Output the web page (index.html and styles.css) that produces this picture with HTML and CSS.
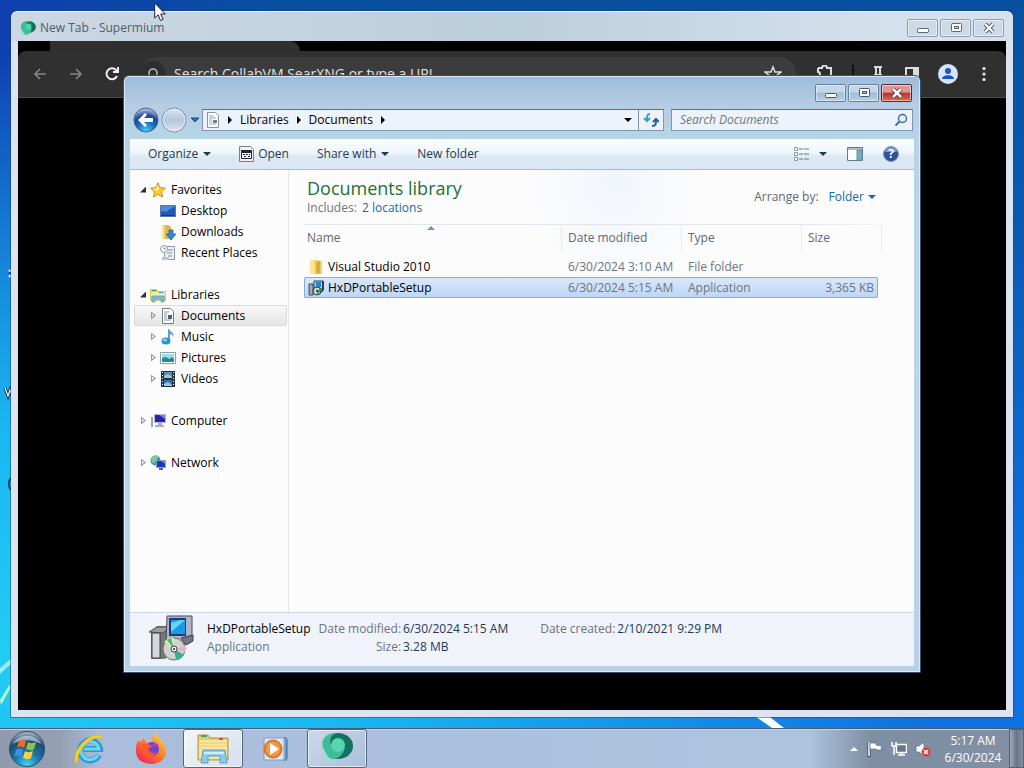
FILE: index.html
```
<!DOCTYPE html>
<html lang="en">
<head>
  <meta charset="UTF-8" />
  <meta name="viewport" content="width=device-width, initial-scale=1.0" />
  <title>Documents</title>
  <link rel="stylesheet" href="styles.css">
</head>
<body>
  <main class="desktop">
    <!-- wallpaper light streaks and the edges of desktop icons -->
    <svg class="streak streak-left" viewBox="0 0 60 100" aria-hidden="true">
      <path d="M0 40 L12 30 V35 L0 46Z" fill="#d4f6ff" opacity=".7"/>
      <path d="M0 72 L10 56 V61 L1 77Z" fill="#b9f7c9"/>
    </svg>
    <svg class="streak streak-right" viewBox="0 0 40 14" aria-hidden="true">
      <path d="M0 0 H14 L32 14 H20Z" fill="#fff"/>
    </svg>
    <svg class="desktop-edge" viewBox="0 0 12 230" aria-hidden="true">
      <path d="M9 6l2 2M9 13l2-2" stroke="#fff" stroke-width="2"/>
      <path d="M9 9h3" stroke="#123" stroke-width="1.5"/>
      <path d="M5 124l3 8 2-6 2 5" fill="none" stroke="#10304a" stroke-width="3"/>
      <path d="M5 124l3 8 2-6 2 5" fill="none" stroke="#fff" stroke-width="1.2"/>
      <path d="M11 214c-3 2-3 9 0 12" fill="none" stroke="#10304a" stroke-width="1.5"/>
    </svg>

    <section class="window browser">
      <header class="browser-title">
        <svg width="16" height="16" viewBox="0 0 32 32" aria-hidden="true">
          <ellipse cx="17" cy="14" rx="15" ry="12" fill="#14705f"/>
          <path d="M2 16C0 6 10 0 20 3c-7 1-9 5-8 10 1 6 8 6 12 4-2 9-8 13-13 13C5 28 3 23 2 16z" fill="#3ebe98"/>
          <circle cx="17" cy="13" r="6" fill="#4fcfab"/>
          <path d="M2 16c3 5 5 11 12 14-7 0-11-6-12-14z" fill="#91e9d0"/>
        </svg>
        <span class="browser-name">New Tab - Supermium</span>
        <div class="caption">
          <button class="cap" aria-label="Minimize"><svg width="14" height="12" viewBox="0 0 14 12"><rect x="1.500" y="6.500" width="11" height="4" rx="1" fill="#fff" stroke="#56657a"/></svg></button>
          <button class="cap" aria-label="Maximize"><svg width="14" height="12" viewBox="0 0 14 12"><rect x="2.500" y="1.500" width="10" height="8" rx="1" fill="#fff" stroke="#56657a"/><rect x="5.500" y="4.500" width="4" height="2" fill="#c8d6e4" stroke="#56657a"/></svg></button>
          <button class="cap" aria-label="Close"><svg width="14" height="12" viewBox="0 0 14 12"><path d="M3 2l8 8M11 2l-8 8" stroke="#56657a" stroke-width="4"/><path d="M3 2l8 8M11 2l-8 8" stroke="#fff" stroke-width="2"/></svg></button>
        </div>
      </header>
      <div class="browser-page">
        <div class="tabstrip"><div class="tab"></div></div>
        <div class="browser-toolbar">
          <button class="tool" aria-label="Back"><svg width="16" height="16" viewBox="0 0 16 16"><path d="M14 8H3M8 3L3 8l5 5" fill="none" stroke="#858585" stroke-width="1.600"/></svg></button>
          <button class="tool" aria-label="Forward"><svg width="16" height="16" viewBox="0 0 16 16"><path d="M2 8h11M8 3l5 5-5 5" fill="none" stroke="#858585" stroke-width="1.600"/></svg></button>
          <button class="tool" aria-label="Reload"><svg width="16" height="16" viewBox="0 0 16 16"><path d="M13 10A5.500 5.500 0 1 1 12 4l2 2M14 1v5H9" fill="none" stroke="#f1f1f1" stroke-width="2"/></svg></button>
          <div class="omnibox">
            <span class="omni-icon"><svg width="14" height="14" viewBox="0 0 14 14" aria-hidden="true"><circle cx="7" cy="6" r="4" fill="none" stroke="#bbb" stroke-width="1.600"/><path d="M9 9l4 4" stroke="#bbb" stroke-width="1.600"/></svg></span>
            <input class="omni-input" type="text" aria-label="Address" placeholder="Search CollabVM SearXNG or type a URL">
            <svg width="18" height="18" viewBox="0 0 18 18" aria-hidden="true"><path d="M9 2l2 5h6l-5 4 2 6-5-4-5 4 2-6-5-4h6z" fill="none" stroke="#ddd" stroke-width="1.500"/></svg>
          </div>
          <div class="browser-actions">
            <button class="tool" aria-label="Extensions"><svg width="18" height="18" viewBox="0 0 18 18"><path d="M2 3h4a2 2 0 0 1 5 0h4v5M2 3v4a2 2 0 0 1 0 4v5h13V8" fill="none" stroke="#ddd" stroke-width="2"/></svg></button>
            <span class="divider"></span>
            <button class="tool" aria-label="Pinned"><svg width="16" height="18" viewBox="0 0 16 18"><path d="M4 2h8M6 2v8M10 2v8M4 10h8" fill="none" stroke="#ddd" stroke-width="2"/></svg></button>
            <button class="tool" aria-label="Side panel"><svg width="16" height="18" viewBox="0 0 16 18"><rect x="2" y="3" width="12" height="12" fill="none" stroke="#ddd" stroke-width="2"/><path d="M9 3h5v12H9z" fill="#ddd"/></svg></button>
            <button class="tool" aria-label="Profile"><svg width="20" height="20" viewBox="0 0 20 20"><circle cx="10" cy="10" r="10" fill="#d6e4fb"/><circle cx="10" cy="7" r="3" fill="#1b56c8"/><path d="M4 15c0-5 12-5 12 0z" fill="#1b56c8"/></svg></button>
            <button class="tool" aria-label="Menu"><svg width="16" height="16" viewBox="0 0 16 16"><g fill="#eee"><circle cx="8" cy="2.500" r="1.600"/><circle cx="8" cy="8" r="1.600"/><circle cx="8" cy="13.500" r="1.600"/></g></svg></button>
          </div>
        </div>
      </div>
    </section>

    <section class="window explorer">
      <header class="explorer-title">
        <div class="caption">
          <button class="cap" aria-label="Minimize"><svg width="14" height="12" viewBox="0 0 14 12"><rect x="1.500" y="6.500" width="11" height="4" rx="1" fill="#fff" stroke="#46566c"/></svg></button>
          <button class="cap" aria-label="Maximize"><svg width="14" height="12" viewBox="0 0 14 12"><rect x="2.500" y="1.500" width="10" height="8" rx="1" fill="#fff" stroke="#46566c"/><rect x="5.500" y="4.500" width="4" height="2" fill="#a9bfd6" stroke="#46566c"/></svg></button>
          <button class="cap cap-close" aria-label="Close"><svg width="14" height="12" viewBox="0 0 14 12"><path d="M3 2l8 8M11 2l-8 8" stroke="#5b2a2c" stroke-width="4"/><path d="M3 2l8 8M11 2l-8 8" stroke="#fff" stroke-width="2.500"/></svg></button>
        </div>
      </header>

      <nav class="navbar">
        <div class="travel">
          <button class="round" aria-label="Back">
            <svg width="26" height="26" viewBox="0 0 26 26">
              <defs>
                <radialGradient id="backFill" cx=".5" cy=".95" r=".9"><stop offset="0" stop-color="#45d0f4"/><stop offset=".45" stop-color="#1668bd"/><stop offset=".7" stop-color="#1b4796"/><stop offset="1" stop-color="#a9bfe0"/></radialGradient>
              </defs>
              <circle cx="13" cy="13" r="12" fill="url(#backFill)" stroke="#4b6384"/>
              <path d="M5 13l7-7 2 2-3 3h9v4h-9l3 3-2 2z" fill="#fff"/>
            </svg>
          </button>
          <button class="round" aria-label="Forward">
            <svg width="26" height="26" viewBox="0 0 26 26">
              <defs><linearGradient id="fwdFill" x2="0" y2="1"><stop offset="0" stop-color="#dbe6f2"/><stop offset=".5" stop-color="#b4c7dd"/><stop offset="1" stop-color="#dde8f3"/></linearGradient></defs>
              <circle cx="13" cy="13" r="12" fill="url(#fwdFill)" stroke="#7388a3"/>
              <circle cx="13" cy="13" r="11" fill="none" stroke="#e7eff7"/>
            </svg>
          </button>
          <button class="recent" aria-label="Recent pages"><svg width="10" height="8" viewBox="0 0 10 8"><path d="M1 2h8L5 6z" fill="#2d79b4" stroke="#234a76"/></svg></button>
        </div>
        <div class="address">
          <svg class="doc-icon" width="16" height="16" viewBox="0 0 16 16" aria-hidden="true"><path d="M2.500.5h8l3 3v12h-11z" fill="#fff" stroke="#8694a4"/><path d="M4 4h5M4 6h7M4 8h3M4 10h3M4 12h7" stroke="#9aaabb"/><path d="M8 8h4v3H8z" fill="#5f86a8"/></svg>
          <span class="tri"></span>
          <a href="#">Libraries</a>
          <span class="tri"></span>
          <a href="#">Documents</a>
          <span class="tri"></span>
          <button class="drop" aria-label="Previous locations"><span class="down"></span></button>
          <button class="refresh" aria-label="Refresh"><svg width="16" height="16" viewBox="0 0 16 16"><path d="M7 2C4 2 4 4 4 8M1 6l3 3 3-3" fill="none" stroke="#3d9bc8" stroke-width="2"/><path d="M9 14c4 0 4-2 4-6M10 10l3-3 3 3" fill="none" stroke="#275f91" stroke-width="2"/></svg></button>
        </div>
        <div class="search">
          <input type="text" aria-label="Search Documents" placeholder="Search Documents">
          <svg width="14" height="14" viewBox="0 0 14 14" aria-hidden="true"><circle cx="8.500" cy="5.500" r="4" fill="#e3f1fb" stroke="#356fae" stroke-width="1.500"/><path d="M5.500 8.500l-4 4" stroke="#356fae" stroke-width="2"/></svg>
        </div>
      </nav>

      <div class="commands">
        <button class="cmd">Organize <span class="down"></span></button>
        <button class="cmd cmd-open"><svg width="15" height="16" viewBox="0 0 15 16" aria-hidden="true"><path d="M.5.5h11l3 3v12H.5z" fill="#f4f1ea" stroke="#7d7d80"/><path d="M2.500 4.500h10v8h-10z" fill="#fff" stroke="#20263c"/><path d="M2 4h11v3H2z" fill="#20263c"/><path d="M4 8h2v1H4zM7 8h2v1H7zM10 8h1v1h-1zM5 10h2v1H5zM9 10h2v1H9z" fill="#20263c"/></svg>Open</button>
        <button class="cmd cmd-share">Share with <span class="down"></span></button>
        <button class="cmd cmd-new">New folder</button>
        <div class="view-tools">
          <button class="cmd" aria-label="Change your view"><svg width="16" height="14" viewBox="0 0 16 14"><g fill="#fff" stroke="#8c99a8"><path d="M1.500.5h3v3h-3zM1.500 5.500h3v3h-3zM1.500 10.500h3v3h-3z"/></g><path d="M6 2h4M11 2h5M6 7h4M11 7h5M6 12h4M11 12h5" stroke="#657587"/></svg><span class="down"></span></button>
          <button class="cmd" aria-label="Preview pane"><svg width="16" height="14" viewBox="0 0 16 14"><path d="M.5.5h15v13H.5z" fill="#fff" stroke="#64788e"/><path d="M1 2h15" stroke="#64788e"/><path d="M10 3h5v10h-5z" fill="#66b8bb" stroke="#74889c"/></svg></button>
          <button class="cmd" aria-label="Help"><svg width="16" height="16" viewBox="0 0 16 16"><circle cx="8" cy="8" r="7.500" fill="#2f52a0" stroke="#8592aa"/><path d="M2 6a6 5 0 0 1 12 0z" fill="#7d99cf"/><text class="help-mark" x="8" y="12" text-anchor="middle">?</text></svg></button>
        </div>
      </div>

      <div class="content">
        <aside class="tree">
          <ul>
            <li class="root"><span class="twist open"></span>
              <svg width="16" height="16" viewBox="0 0 16 16" aria-hidden="true"><path d="M8 .8l2.200 4.800 5.200.6-3.900 3.500 1.100 5.300L8 12.400 3.400 15l1.100-5.300L.6 6.200l5.200-.6z" fill="#fcc934" stroke="#d68a22"/><path d="M8 3l1.300 3.500L7 9 3 7l3.300-.5z" fill="#fff2a0"/></svg>
              <a href="#">Favorites</a></li>
            <li><span class="twist"></span>
              <svg width="16" height="16" viewBox="0 0 16 16" aria-hidden="true"><path d="M.5 2.500h15v11H.5z" fill="#235ab9" stroke="#5578a9"/><path d="M1 3h14L6 9l-5-1z" fill="#4a8cdb"/><path d="M1 12h14v1H1z" fill="#163a78"/></svg>
              <a href="#">Desktop</a></li>
            <li><span class="twist"></span>
              <svg width="16" height="16" viewBox="0 0 16 16" aria-hidden="true"><path d="M1 1h7l3 2v12H1z" fill="#f3d578"/><path d="M5 1h3l3 2v12H5z" fill="#e1b54a"/><path d="M1 1h2v14H1z" fill="#fff0b5"/><path d="M9 6h4v4h3l-5 6-5-6h3z" fill="#348ad0" stroke="#2566a1" stroke-width=".8"/></svg>
              <a href="#">Downloads</a></li>
            <li><span class="twist"></span>
              <svg width="16" height="16" viewBox="0 0 16 16" aria-hidden="true"><path d="M4.500 1.500h10v13h-8l-2-2z" fill="#edf1f4" stroke="#8b98a3"/><circle cx="4" cy="4" r="3.500" fill="#fff" stroke="#8b98a3"/><path d="M4 2v2h2M8 5h5M7 8h5M8 11h4" fill="none" stroke="#7f8e9a"/><path d="M2 12h7v3H2z" fill="#bcc6cd"/></svg>
              <a href="#">Recent Places</a></li>
          </ul>
          <ul>
            <li class="root"><span class="twist open"></span>
              <svg width="16" height="16" viewBox="0 0 16 16" aria-hidden="true"><path d="M0 2h7l1 2h8v10H0z" fill="#e3ca63"/><path d="M1 5h14v4H1z" fill="#f7eaa0"/><path d="M2 3h4v1H2z" fill="#3b9b4b"/><path d="M9 5h4v1H9z" fill="#3d8ed0"/><path d="M2 9h12v6h-3v-3H5v3H2z" fill="#79bedb" stroke="#579db8" stroke-width=".7"/></svg>
              <a href="#">Libraries</a></li>
            <li class="current"><span class="twist closed"></span>
              <svg width="16" height="16" viewBox="0 0 16 16" aria-hidden="true"><path d="M2.500.5h8l3 3v12h-11z" fill="#fff" stroke="#707c87"/><path d="M4 4h5M4 6h3M4 8h3M4 10h3M4 12h7" stroke="#8a98a6"/><path d="M8 7h4v4H8z" fill="#3f638a"/></svg>
              <a href="#">Documents</a></li>
            <li><span class="twist closed"></span>
              <svg width="16" height="16" viewBox="0 0 16 16" aria-hidden="true"><path d="M9 0c1 3 6 3 4 9 0-3-1-4-3-4v7H8V0z" fill="#5b9fd0"/><ellipse cx="6" cy="12" rx="4.500" ry="3.500" fill="#2798cf"/><ellipse cx="5" cy="11" rx="2" ry="1.200" fill="#8bdcf2"/></svg>
              <a href="#">Music</a></li>
            <li><span class="twist closed"></span>
              <svg width="16" height="16" viewBox="0 0 16 16" aria-hidden="true"><path d="M.5 2.500h15v11H.5z" fill="#fff" stroke="#8c9caa"/><path d="M2 4h12v8H2z" fill="#9edce5"/><path d="M2 8l4-1 3 2 3-2 2 2v3H2z" fill="#278a94"/></svg>
              <a href="#">Pictures</a></li>
            <li><span class="twist closed"></span>
              <svg width="16" height="16" viewBox="0 0 16 16" aria-hidden="true"><path d="M1 0h14v16H1z" fill="#26323f"/><path d="M4 1h8v6H4z" fill="#538ec5"/><path d="M4 9h8v6H4z" fill="#3374b0"/><path d="M4 5l4-2 4 3v1H4zM4 13l4-2 4 3v1H4z" fill="#9bc9dc"/><path d="M2.500 1v14M13.500 1v14" stroke="#e2edf5" stroke-dasharray="1 2"/></svg>
              <a href="#">Videos</a></li>
          </ul>
          <ul>
            <li class="root"><span class="twist closed"></span>
              <svg width="16" height="16" viewBox="0 0 16 16" aria-hidden="true"><path d="M4 1h12v9H4z" fill="#b5bcce"/><path d="M5 2h10v7H5z" fill="#2627a8"/><path d="M9 2h6v4z" fill="#7383e5"/><path d="M8 10h4v2h2v2H5v-2h3z" fill="#a7adb8"/><path d="M1 4h2v10H1z" fill="#9ba3ad"/></svg>
              <a href="#">Computer</a></li>
          </ul>
          <ul>
            <li class="root"><span class="twist closed"></span>
              <svg width="16" height="16" viewBox="0 0 16 16" aria-hidden="true"><circle cx="5.500" cy="5.500" r="5" fill="#2492ac"/><path d="M1 4c2-4 6-4 8-2L6 5 4 9C2 8 1 6 1 4z" fill="#72cf96"/><path d="M6 5h10v8H6z" fill="#8fa1c2"/><path d="M7 6h8v6H7z" fill="#1e35b5"/><path d="M11 6h4v3z" fill="#6581e6"/><path d="M9 13h4v2H9z" fill="#5565a1"/></svg>
              <a href="#">Network</a></li>
          </ul>
        </aside>

        <div class="library">
          <div class="library-head">
            <div>
              <h1>Documents library</h1>
              <p>Includes: <a href="#">2 locations</a></p>
            </div>
            <div class="arrange">Arrange by: <button>Folder <span class="down"></span></button></div>
          </div>
          <div class="listing">
            <table>
              <thead>
                <tr>
                  <th class="col-name">Name<span class="sorted"></span></th>
                  <th class="col-date">Date modified</th>
                  <th class="col-type">Type</th>
                  <th class="col-size">Size</th>
                </tr>
              </thead>
              <tbody>
                <tr>
                  <td class="name"><div class="file"><svg width="16" height="16" viewBox="0 0 16 16" aria-hidden="true"><path d="M2 1h6l6 1v13H2z" fill="#efd06b"/><path d="M2 1h4v14H2z" fill="#f9e69c"/><path d="M8 3l4-1v12l-4 1z" fill="#d8ad3d"/><path d="M6 3h2v12H6z" fill="#f5d977"/></svg>Visual Studio 2010</div></td>
                  <td>6/30/2024 3:10 AM</td>
                  <td>File folder</td>
                  <td class="size"></td>
                </tr>
                <tr class="selected">
                  <td class="name"><div class="file"><svg width="16" height="16" viewBox="0 0 16 16" aria-hidden="true"><path d="M1 4h4v11H1z" fill="#9caab5" stroke="#334b5b"/><path d="M6 1h9v8H6z" fill="#bacad6" stroke="#2d4356"/><path d="M8 2h5v5H8z" fill="#2287d0"/><circle cx="9" cy="11" r="4" fill="#cbd8cc" stroke="#233e3d"/><path d="M9 11l3-3 1 3-4 4z" fill="#3ba075"/><circle cx="9" cy="11" r="1" fill="#213242"/><path d="M15 1v9l-2 2" fill="none" stroke="#16283c" stroke-width="1.500"/></svg>HxDPortableSetup</div></td>
                  <td>6/30/2024 5:15 AM</td>
                  <td>Application</td>
                  <td class="size">3,365 KB</td>
                </tr>
              </tbody>
            </table>
          </div>
        </div>
      </div>

      <footer class="details">
        <svg width="48" height="48" viewBox="0 0 48 48" aria-hidden="true">
          <path d="M4 18l6-6h13v28l-5 5H4z" fill="#75777a"/>
          <path d="M5 19h8v25H5z" fill="#d5d7da" stroke="#3d3e41"/>
          <path d="M2 18l8-5h13l-7 6z" fill="#9b9da0" stroke="#4b4c50"/>
          <path d="M20 2h25v24l-5 4H19z" fill="#b1b4c4" stroke="#4c4d60"/>
          <path d="M22 4h17v18H22z" fill="#233a79"/>
          <path d="M24 6h14v14H24z" fill="#159ce3"/>
          <path d="M24 18V9l10-3h4z" fill="#64d6f6"/>
          <path d="M34 24l12-3v6l-7 4z" fill="#737587" stroke="#3f4052"/>
          <circle cx="27" cy="35" r="11" fill="#cfd3d2" stroke="#66706f"/>
          <path d="M27 35L17 28c3-4 7-5 10-4z" fill="#dce999"/>
          <path d="M27 35l-7-9 4-2z" fill="#39b69d"/>
          <path d="M27 35l10 6c-2 3-5 5-8 5z" fill="#36b18d"/>
          <path d="M27 35l11-3v6z" fill="#e3b8bd"/>
          <circle cx="27" cy="35" r="3" fill="#f4f4f4" stroke="#444"/><circle cx="27" cy="35" r="1" fill="#222"/>
        </svg>
        <div class="detail-name"><strong>HxDPortableSetup</strong><span>Application</span></div>
        <dl>
          <dt>Date modified:</dt><dd>6/30/2024 5:15 AM</dd>
          <dt>Size:</dt><dd>3.28 MB</dd>
        </dl>
        <dl class="created">
          <dt>Date created:</dt><dd>2/10/2021 9:29 PM</dd>
        </dl>
      </footer>
    </section>

    <svg class="cursor" width="12" height="20" viewBox="0 0 12 20" aria-hidden="true"><path d="M.7 1v15l3.400-3.200 2.400 5.700 2.600-1.100-2.400-5.400h4.600z" fill="#fff" stroke="#18203a"/></svg>
  </main>

  <footer class="taskbar">
    <button class="start" aria-label="Start">
      <svg width="38" height="38" viewBox="0 0 38 38">
        <defs><radialGradient id="orb" cx=".5" cy=".95" r=".95"><stop offset="0" stop-color="#3fd5f7"/><stop offset=".4" stop-color="#1c72a8"/><stop offset=".75" stop-color="#22496f"/><stop offset="1" stop-color="#b5c5d6"/></radialGradient></defs>
        <circle cx="19" cy="19" r="17.500" fill="url(#orb)" stroke="#2b4a69"/>
        <path d="M5 14a15 13 0 0 1 28 0c-8-5-20-5-28 0z" fill="#dce6ee" opacity=".6"/>
        <path d="M11 11c3-2 5-1 7 0l-2 7c-2-2-5-2-7 0z" fill="#ee6a2c"/>
        <path d="M20 12c3 2 5 1 8 0l-2 7c-3 2-5 1-8 0z" fill="#8cc63f"/>
        <path d="M8 20c3-2 5-1 7 0l-2 7c-2-2-5-2-7 0z" fill="#3796dd"/>
        <path d="M17 21c3 2 5 1 8 0l-2 7c-3 2-5 1-8 0z" fill="#fccf3d"/>
      </svg>
    </button>
    <div class="tasks">
      <button class="task" aria-label="Internet Explorer">
        <svg width="34" height="34" viewBox="0 0 34 34"><path d="M27 23A10 10 0 1 1 28 17H11" fill="none" stroke="#2d9bd6" stroke-width="6"/><path d="M26 23A9 9 0 1 1 27 17H12" fill="none" stroke="#6fd3f5" stroke-width="3"/><path d="M4 31C-1 25 9 6 24 3c5-1 7 1 5 6 0-3-2-4-5-3C13 9 4 23 6 31z" fill="#f3d12e" stroke="#d2ab20" stroke-width=".6"/></svg>
      </button>
      <button class="task" aria-label="Firefox">
        <svg width="34" height="34" viewBox="0 0 34 34"><defs><linearGradient id="fox" x1="1" x2=".2" y2="1"><stop offset="0" stop-color="#ffe84b"/><stop offset=".45" stop-color="#ff8a24"/><stop offset="1" stop-color="#ed2457"/></linearGradient></defs><path d="M4 9l3 1 2-4 4 5c2-1 4-1 6 0l-1-6 4-4c0 5 9 7 10 17 1 8-6 14-14 14C8 32 2 27 2 19c0-4 0-7 2-10z" fill="url(#fox)"/><circle cx="18" cy="17" r="7" fill="#7042d1"/><path d="M9 12c3-1 7 0 10 3-4 0-5 2-4 4 2 3 5 2 7 1-2 7-13 5-14-2z" fill="#fc582e"/><path d="M17 11c3-1 7 1 8 5-2-2-4-2-6-1z" fill="#a13fc4"/></svg>
      </button>
      <button class="task task-open task-active" aria-label="Documents">
        <svg width="36" height="34" viewBox="0 0 36 34"><path d="M3 3h10l2 3h18v22H3z" fill="#e8c967" stroke="#ba963b"/><path d="M4 8h28v19H4z" fill="#f9e7a1"/><path d="M4 11h28M4 14h28" stroke="#e8ca72"/><path d="M6 3h6v2H6z" fill="#44a06e"/><path d="M16 5h6v2h-6z" fill="#ddb443"/><path d="M24 6h4v2h-4z" fill="#d54b31"/><path d="M8 18h22l2 13h-7v-7H13v7H6z" fill="#8bcce8" stroke="#579eca"/><path d="M9 20h20v2H9z" fill="#d2effa"/></svg>
      </button>
      <button class="task" aria-label="Windows Media Player">
        <svg width="32" height="32" viewBox="0 0 32 32"><path d="M5 5h20v22H5z" fill="#dce8f4" stroke="#7d9ec0"/><path d="M25 5h2v22h-2M28 6v20" fill="none" stroke="#4f8abf" stroke-width="1.500"/><circle cx="14" cy="16" r="9" fill="#ed812b" stroke="#cf671d"/><circle cx="14" cy="16" r="7" fill="#f39a43"/><path d="M11 10v12l9-6z" fill="#fff"/></svg>
      </button>
      <button class="task task-open" aria-label="Supermium">
        <svg width="34" height="34" viewBox="0 0 34 34"><ellipse cx="18" cy="14" rx="15" ry="13" fill="#14705f"/><path d="M3 15C0 6 8 0 18 1c-7 1-9 6-7 12 2 5 8 6 14 3-2 7-7 11-13 11-5-1-8-6-9-12z" fill="#3ebe98"/><circle cx="18" cy="13" r="7" fill="#56d5b1"/><path d="M3 15c3 6 5 13 13 16-8 0-12-7-13-16z" fill="#91e9d0"/></svg>
      </button>
    </div>
    <div class="tray">
      <button class="tray-button" aria-label="Show hidden icons"><svg width="10" height="6" viewBox="0 0 10 6"><path d="M1 5h8L5 1z" fill="#fff"/></svg></button>
      <button class="tray-button" aria-label="Action Center"><svg width="16" height="16" viewBox="0 0 16 16"><path d="M2 1v15" stroke="#384656" stroke-width="3"/><path d="M2 1v14" stroke="#fff" stroke-width="1.500"/><path d="M3 2h6v2l6 1-1 3 1 1H9V8H3z" fill="#fff" stroke="#566578" stroke-width=".7"/></svg></button>
      <button class="tray-button" aria-label="Network"><svg width="16" height="16" viewBox="0 0 16 16"><path d="M5.500 3.500h10v8h-10z" fill="#65758a" stroke="#fff" stroke-width="1.500"/><path d="M7 14h7M10.500 12v2" stroke="#fff" stroke-width="1.500"/><path d="M1 1v4h4V1M3 5v9" fill="none" stroke="#fff" stroke-width="1.500"/></svg></button>
      <button class="tray-button" aria-label="Volume muted"><svg width="16" height="16" viewBox="0 0 16 16"><path d="M1 5h3l5-4v14l-5-4H1z" fill="#fff" stroke="#5e6b7d" stroke-width=".7"/><circle cx="11" cy="11" r="4.500" fill="#d53d35"/><path d="M9 9l4 4M13 9l-4 4" stroke="#fff" stroke-width="1.500"/></svg></button>
      <button class="clock"><span>5:17 AM</span><span>6/30/2024</span></button>
      <button class="show-desktop" aria-label="Show desktop"></button>
    </div>
  </footer>
</body>
</html>
```
FILE: styles.css
```
* {
  box-sizing: border-box;
}

body {
  margin: 0;
  height: 100vh;
  display: flex;
  flex-direction: column;
  overflow: hidden;
  font-family: "Open Sans", "Noto Sans", sans-serif;
  font-size: 12px;
  line-height: 18px;
  color: #000;
}

button, input {
  font: inherit;
  color: inherit;
  margin: 0;
  padding: 0;
  border: 0;
  background: none;
}

button {
  display: flex;
  align-items: center;
  justify-content: center;
  white-space: nowrap;
}

a {
  color: inherit;
  text-decoration: none;
}

svg {
  display: block;
  flex: none;
}

.desktop {
  position: relative;
  flex: 1;
  background:
    radial-gradient(ellipse at 0 90%, #22ccf4 0, #1ab6f2 25%, rgba(20, 130, 225, 0) 65%),
    linear-gradient(90deg, rgba(18, 56, 184, .7), rgba(10, 80, 170, 0) 30%),
    linear-gradient(#06509f, #0a5ab0 30%, #0f70df 80%);
}

.streak, .desktop-edge, .cursor, .window {
  position: absolute;
}

.streak-left {
  left: 0;
  bottom: 0;
  width: 60px;
}

.streak-right {
  right: 232px;
  bottom: 0;
  width: 40px;
}

.desktop-edge {
  left: 0;
  top: 264px;
  width: 12px;
}

.cursor {
  left: 154px;
  top: 2px;
}

/* windows */
.window {
  display: flex;
  flex-direction: column;
}

.caption {
  display: flex;
  gap: 2px;
  margin-left: auto;
}

.cap {
  width: 31px;
  height: 18px;
  border: 1px solid #667f9c;
  border-radius: 2px;
  background: linear-gradient(#c3d6ea 45%, #a2bbd5 50%, #b9d0e5);
  box-shadow: inset 0 0 0 1px rgba(255, 255, 255, .5);
}

.cap-close {
  border-color: #552a3c;
  background: linear-gradient(#dc9a91 45%, #b93427 50%, #d46c58);
}

.browser {
  inset: 11px 11px 11px 11px;
  padding: 0 7px 7px;
  border-radius: 6px 6px 0 0;
  background: linear-gradient(90deg, #ccd8e3, #bccfdc 50%, #d5e2ee 90%) top / 100% 30px no-repeat, #dce4f2;
  box-shadow: inset 0 1px #e9f1f7, 0 0 0 1px rgba(30, 65, 100, .5);
}

.browser-title {
  height: 30px;
  padding: 4px 2px 0 2px;
  display: flex;
  align-items: center;
}

.browser-name {
  margin-left: 4px;
  color: #4c5d6d;
}

.browser .cap {
  border-color: #8d9eae;
  background: #cddae6;
}

.browser-page {
  flex: 1;
  background: #000;
}

.tabstrip {
  height: 10px;
  padding-left: 32px;
}

.tab {
  width: 250px;
  height: 10px;
  border-radius: 0 10px 0 0;
  background: #2f2f2f;
}

.browser-toolbar {
  height: 47px;
  display: flex;
  align-items: center;
  padding: 0 14px;
  gap: 20px;
  border-bottom: 1px solid #4d4d4d;
  border-radius: 8px 8px 0 0;
  background: #303030;
}

.tool {
  min-width: 16px;
}

.omnibox {
  flex: 1;
  height: 34px;
  display: flex;
  align-items: center;
  padding: 0 14px 0 0;
  border-radius: 17px;
  background: #3c3c3c;
}

.omni-icon {
  width: 26px;
  height: 26px;
  display: grid;
  place-items: center;
  border-radius: 50%;
  background: #2e2e2e;
}

.omni-input {
  flex: 1;
  margin-left: 8px;
  font-size: 14px;
}

.omni-input::placeholder {
  color: #e3e3e3;
}

.browser-actions {
  display: flex;
  align-items: center;
  gap: 18px;
}

.divider {
  width: 2px;
  height: 18px;
  margin-right: -2px;
  background: #111;
}

.explorer {
  inset: 75px 103px 55px 123px;
  border: 1px solid #37516c;
  border-radius: 6px 6px 0 0;
  padding: 0 6px 6px;
  background: linear-gradient(#9ebbdb, #b6cde4 30px, #b7d4e6 60px, #b9d5ea 300px, #b9d1e6);
  box-shadow: inset 0 0 0 1px rgba(225, 243, 255, .8);
}

.explorer-title {
  height: 33px;
  padding: 8px 2px 0;
  display: flex;
  align-items: flex-start;
}

.navbar {
  height: 30px;
  padding: 0 1px 0 2px;
  display: flex;
  align-items: flex-start;
}

.travel {
  display: flex;
  align-items: center;
  height: 22px;
}

.round {
  width: 28px;
}

.recent {
  width: 14px;
}

.address, .search {
  height: 22px;
  display: flex;
  align-items: center;
  border: 1px solid #7f96b0;
  border-top-color: #56708c;
  background: #eef3fb;
}

.address {
  flex: 1;
  padding-left: 2px;
}

.doc-icon {
  margin-right: 7px;
}

.tri {
  margin-right: 8px;
  border: 4px solid transparent;
  border-left-color: #000;
  border-right: 0;
}

.address a {
  margin-right: 8px;
}

.down {
  display: inline-block;
  border: 4px solid transparent;
  border-top-color: currentColor;
  border-bottom: 0;
}

.drop {
  width: 20px;
  height: 20px;
  margin-left: auto;
}

.refresh {
  width: 25px;
  height: 20px;
  border-left: 1px solid #7f96b0;
}

.search {
  width: 242px;
  margin-left: 7px;
  padding: 0 4px 0 8px;
}

.search input {
  flex: 1;
  min-width: 0;
  font-style: italic;
}

.search input::placeholder {
  color: #6e7681;
}

/* command bar */
.commands {
  height: 31px;
  display: flex;
  align-items: center;
  padding: 0 15px 0 18px;
  border-bottom: 1px solid #a9bbcf;
  background: linear-gradient(#fcfeff, #edf6fb 45%, #dde7f5 60%, #dbe7f4);
  color: #1e395b;
}

.cmd {
  gap: 5px;
}

.cmd-open {
  margin-left: 28px;
  gap: 4px;
}

.cmd-share, .cmd-new {
  margin-left: 28px;
}

.view-tools {
  display: flex;
  align-items: center;
  gap: 20px;
  margin-left: auto;
}

.view-tools .cmd {
  gap: 10px;
}

.help-mark {
  font-size: 12px;
  font-weight: bold;
  fill: #fff;
}

/* navigation tree */
.content {
  flex: 1;
  min-height: 0;
  display: flex;
  background: #fcfcfd;
}

.tree {
  width: 159px;
  padding: 9px 1px 0 4px;
  border-right: 1px solid #e2e6ed;
}

.tree ul {
  list-style: none;
  margin: 0 0 21px;
  padding: 0;
}

.tree li {
  height: 21px;
  padding-left: 16px;
  display: flex;
  align-items: center;
}

.tree .root {
  padding-left: 6px;
}

.tree li a {
  margin-left: 5px;
}

.tree .current {
  border: 1px solid #dadada;
  border-radius: 2px;
  padding-left: 15px;
  background: linear-gradient(#f8f8f8, #e5e5e5);
}

.twist {
  width: 10px;
  height: 8px;
  flex: none;
}

.twist.open {
  height: 6px;
  width: 6px;
  margin-right: 4px;
  background: #303030;
  clip-path: polygon(100% 0, 100% 100%, 0 100%);
}

.twist.closed {
  background: #9a9a9a;
  clip-path: polygon(10% 0, 60% 50%, 10% 100%, 10% 80%, 40% 50%, 20% 25%, 20% 90%, 10% 100%);
}

/* library */
.library {
  flex: 1;
  min-width: 0;
  background: radial-gradient(ellipse at 52% 2%, #f1f5fc 0, rgba(252, 252, 253, 0) 18%);
}

.library-head {
  height: 54px;
  padding: 6px 38px 0 18px;
  display: flex;
  justify-content: space-between;
}

h1 {
  margin: 0;
  font-size: 18px;
  font-weight: normal;
  line-height: 24px;
  color: #1d7235;
}

.library-head p {
  margin: 0;
  line-height: 16px;
  color: #6d7580;
}

.library-head p a {
  margin-left: 2px;
  color: #1768b1;
}

.arrange {
  padding-top: 12px;
  display: flex;
  align-items: flex-start;
  gap: 10px;
  color: #5f6876;
}

.arrange button {
  gap: 4px;
  color: #1768a9;
}

.listing {
  margin: 0 14px 0 15px;
  background: linear-gradient(90deg, #e2e6ea 85%, transparent) top / 100% 1px no-repeat;
}

table {
  width: 574px;
  max-width: 100%;
  table-layout: fixed;
  border-collapse: separate;
  border-spacing: 0;
}

th {
  position: relative;
  height: 28px;
  padding: 0 6px;
  text-align: left;
  font-weight: normal;
  color: #5f6876;
  border-right: 1px solid #e6eaef;
}

.col-name {
  width: 258px;
  padding-left: 3px;
}

.col-date, .col-type {
  width: 120px;
}

.col-size {
  border-right: 0;
  box-shadow: 3px 0 #fcfcfd, 4px 0 #e6eaef;
}

.sorted {
  position: absolute;
  top: 2px;
  left: 48%;
  border: 4px solid transparent;
  border-bottom-color: #7c8d9d;
  border-top: 0;
}

td {
  height: 21px;
  padding: 0 6px;
  color: #6d7580;
  white-space: nowrap;
}

tbody::before {
  content: "";
  display: block;
  height: 4px;
}

.name {
  padding-left: 4px;
  color: #000;
}

.file {
  display: flex;
  align-items: center;
  gap: 4px;
}

.size {
  text-align: right;
  padding-right: 4px;
}

.selected {
  outline: 1px solid #84acdd;
  outline-offset: -1px;
  border-radius: 2px;
  background: linear-gradient(#dbe9fb, #bcd5f6);
}

/* details pane */
.details {
  height: 54px;
  display: flex;
  padding: 1px 18px 0 17px;
  border-top: 1px solid #ccd6e2;
  background: #f0f3fa;
  color: #1e395b;
}

.detail-name {
  margin-left: 12px;
  padding-top: 6px;
  display: flex;
  flex-direction: column;
  color: #6b7482;
}

.detail-name strong {
  font-weight: normal;
  color: #000;
}

.details dl {
  margin: 6px 0 0 8px;
  display: grid;
  grid-template-columns: auto auto;
  grid-auto-rows: 18px;
  column-gap: 2px;
}

.details .created {
  margin-left: 32px;
}

.details dt {
  text-align: right;
  color: #6b7482;
}

.details dd {
  margin: 0;
}

/* taskbar */
.taskbar {
  height: 40px;
  display: flex;
  align-items: center;
  padding-left: 8px;
  border-top: 1px solid #405e7c;
  background: linear-gradient(90deg, #8f9bad 0, #949fb3 60px, #aabdda 100px, #adc4df 79%, #7e8fa3 85%, #8190a3);
  box-shadow: inset 0 1px #c2d2e3;
}

.start {
  width: 38px;
  margin-right: 13px;
}

.tasks {
  display: flex;
  gap: 2px;
}

.task {
  width: 60px;
  height: 39px;
  border-radius: 3px;
}

.task-open {
  border: 1px solid #54667e;
  background: linear-gradient(135deg, #ccd9e8, #aabfdb);
  box-shadow: inset 0 0 0 1px rgba(255, 255, 255, .6);
}

.task-active {
  background: linear-gradient(135deg, #f3f6fa, #d5dfec);
}

.tray {
  margin-left: auto;
  height: 100%;
  display: flex;
  align-items: center;
  gap: 8px;
  color: #fff;
}

.clock {
  flex-direction: column;
  width: 68px;
  line-height: 17px;
}

.show-desktop {
  width: 15px;
  height: 100%;
  margin-left: -6px;
  border: 1px solid #56647a;
  background: linear-gradient(90deg, #a0abb9, #697689 50%, #8290a1);
}
```
